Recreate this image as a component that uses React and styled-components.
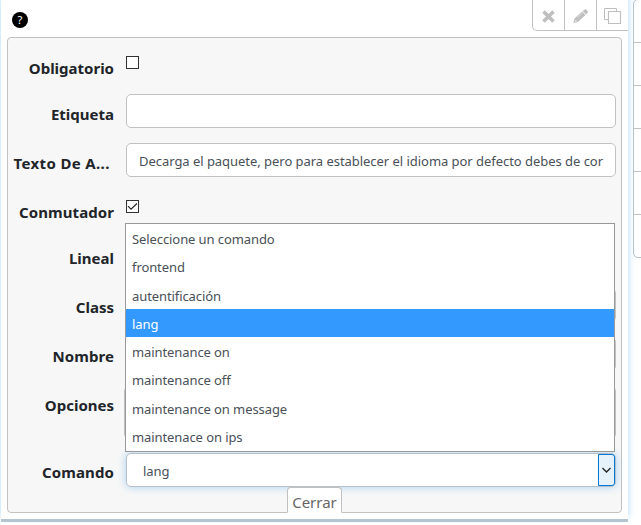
import React from "react";
import styled, { createGlobalStyle } from "styled-components";

const Global = createGlobalStyle`
  * { box-sizing: border-box; }
  body {
    margin: 0;
    background: #fff;
    overflow: hidden;
    font-family: "Noto Sans", "Open Sans", sans-serif;
    color: #212529;
  }
`;

const Page = styled.main`
  display: flex;
  gap: 5px;
  width: 641px;
  height: 525px;
  padding-left: 1px;
  overflow: hidden;
`;

const Card = styled.section`
  width: 627px;
  height: 522px;
  flex: none;
  padding: 0 6px;
  background: #fff;
  border-bottom: 3px solid #b5c4d1;
  box-shadow: 0 -5px 7px 0 #a9d6f8;
`;

const Header = styled.header`
  display: flex;
  justify-content: space-between;
  height: 37px;
  margin-right: -6px;
  padding-left: 5px;
`;

const Help = styled.span`
  display: grid;
  place-items: center;
  width: 16px;
  height: 16px;
  margin-top: 12px;
  border-radius: 50%;
  background: #000;
  color: #fff;
  font-size: 11px;
  line-height: 16px;
`;

const Toolbar = styled.div`
  display: flex;
  height: 31px;
  border: solid #c1c1c1;
  border-width: 0 0 1px 1px;
  border-radius: 0 0 0 5px;
`;

const Tool = styled.button`
  display: block;
  width: 31px;
  height: 30px;
  padding: 0;
  border: 0;
  background: none;
  & + & {
    width: 32px;
    border-left: 1px solid #c1c1c1;
  }
  svg { display: block; }
`;

const Panel = styled.div`
  display: grid;
  grid-template-rows: 56px 49px 49px 47px 49px 49px 49px 67px 59px;
  width: 615px;
  height: 476px;
  border: 1px solid #c1c1c1;
  border-radius: 4px;
  background: #f7f7f7;
`;

const Row = styled.div`
  display: grid;
  grid-template-columns: 106px 490px;
  column-gap: 12px;
  align-items: start;
`;

const Label = styled.label`
  padding-top: ${(p) => p.$drop}px;
  text-align: right;
  font-size: 15px;
  font-weight: 700;
  line-height: 24px;
  letter-spacing: ${(p) => p.$track || 0}px;
  white-space: nowrap;
`;

const Check = styled.span`
  width: 13px;
  height: 13px;
  margin-top: ${(p) => p.$drop}px;
  border: 1px solid #333;
  background: #fff;
  svg { display: block; }
`;

const Field = styled.div`
  height: ${(p) => p.$height || 34}px;
  margin-left: ${(p) => p.$shift || 0}px;
  padding: 0 12px;
  border: 1px solid #c1c1c1;
  border-radius: 5px;
  background: #fff;
  color: #495057;
  font-size: 13px;
  line-height: 34px;
  letter-spacing: -0.04px;
  white-space: nowrap;
`;

const SelectWrap = styled.div`
  position: relative;
`;

const Select = styled.div`
  display: flex;
  justify-content: space-between;
  height: 34px;
  padding-left: 16px;
  border: 1px solid #b9c0c7;
  border-radius: 5px;
  background: #fff;
  box-shadow: 0 0 9px #a4cff0;
  color: #495057;
  font-size: 13px;
  line-height: 34px;
  letter-spacing: -0.1px;
`;

const Arrow = styled.span`
  width: 17px;
  height: 32px;
  border: 1px solid #0078d7;
  border-radius: 0 3px 3px 0;
  background: #e5f1fb;
  svg { display: block; }
`;

const Menu = styled.ul`
  position: absolute;
  left: -1px;
  bottom: 35px;
  width: 490px;
  height: 229px;
  margin: 0;
  padding: 0;
  border: 1px solid #999;
  background: #fff;
  list-style: none;
`;

const Option = styled.li`
  height: 28.3px;
  padding-left: 6px;
  background: ${(p) => (p.$active ? "#3399ff" : "transparent")};
  color: ${(p) => (p.$active ? "#fff" : "#495057")};
  font-size: 13px;
  line-height: 31px;
  letter-spacing: -0.09px;
`;

const Close = styled.button`
  display: block;
  position: relative;
  width: 55px;
  height: 26px;
  margin: -26px 0 0 280px;
  padding: 0;
  border: 1px solid #c1c1c1;
  border-bottom-color: #fff;
  border-radius: 4px 4px 0 0;
  background: #fff;
  color: #666;
  font: 15px/29px "Noto Sans", sans-serif;
`;

const SideList = styled.aside`
  flex: none;
  width: 20px;
  height: 259px;
  margin-top: -1px;
  overflow: hidden;
  border: 1px solid #b9c2ca;
  border-radius: 5px;
`;

const SideItem = styled.div`
  height: 43px;
  border-bottom: 1px solid #c1c1c1;
  &:last-child { border-bottom: 0; }
`;

const options = [
  "Seleccione un comando",
  "frontend",
  "autentificación",
  "lang",
  "maintenance on",
  "maintenance off",
  "maintenance on message",
  "maintenace on ips",
];

export default function App() {
  return (
    <>
      <Global />
      <Page>
        <Card>
          <Header>
            <Help>?</Help>
            <Toolbar>
              <Tool aria-label="Eliminar">
                <svg width="31" height="30" viewBox="0 0 31 30" stroke="#bfbfbf" strokeWidth="3.6">
                  <path d="M10.500 11.500l10 10M20.500 11.500l-10 10" />
                </svg>
              </Tool>
              <Tool aria-label="Editar">
                <svg width="31" height="30" viewBox="0 0 31 30" fill="#bfbfbf">
                  <path d="M8.500 23l1-4.500 7.700-7 3.300 3.600-7.700 7zM17.700 11l2-1.500q.9-.4 1.700.3l1.300 1.400q.6.900 0 1.600l-1.800 1.800z" />
                  <path d="M12.500 17.500l4.800-4.300" stroke="#eee" strokeWidth=".6" />
                  <circle cx="10.800" cy="20.900" r=".7" fill="#fff" />
                </svg>
              </Tool>
              <Tool aria-label="Duplicar">
                <svg width="31" height="30" viewBox="0 0 31 30" fill="#fff" stroke="#bfbfbf">
                  <path d="M7.500 8.500h12v11h-12z" />
                  <path d="M11.500 11.500h12v12h-12z" strokeWidth="1.200" />
                </svg>
              </Tool>
            </Toolbar>
          </Header>
          <Panel>
            <Row>
              <Label $drop={18}>Obligatorio</Label>
              <Check $drop={18} />
            </Row>
            <Row>
              <Label $drop={8}>Etiqueta</Label>
              <Field />
            </Row>
            <Row>
              <Label $drop={8} $track={0.35}>Texto De A...&nbsp;</Label>
              <Field>Decarga el paquete, pero para establecer el idioma por defecto debes de cor</Field>
            </Row>
            <Row>
              <Label $drop={8} $track={0.07}>Conmutador</Label>
              <Check $drop={8}>
                <svg width="11" height="11" viewBox="0 0 11 11" fill="none" stroke="#222" strokeWidth="1.1">
                  <path d="M1 5.200l3 3L10 2.500" />
                </svg>
              </Check>
            </Row>
            <Row>
              <Label $drop={7}>Lineal</Label>
            </Row>
            <Row>
              <Label $drop={7}>Class</Label>
              <Field />
            </Row>
            <Row>
              <Label $drop={7} $track={0.07}>Nombre</Label>
              <Field />
            </Row>
            <Row>
              <Label $drop={7}>Opciones</Label>
              <Field $height={53} $shift={-2} />
            </Row>
            <Row>
              <Label $drop={7} $track={0.1}>Comando</Label>
              <SelectWrap>
                <Select>
                  lang
                  <Arrow>
                    <svg width="15" height="30" viewBox="0 0 15 30" fill="none" stroke="#222" strokeWidth="1.3">
                      <path d="M3.500 13l4 4 4-4" />
                    </svg>
                  </Arrow>
                </Select>
                <Menu>
                  {options.map((name) => (
                    <Option key={name} $active={name === "lang"}>{name}</Option>
                  ))}
                </Menu>
              </SelectWrap>
            </Row>
          </Panel>
          <Close>Cerrar</Close>
        </Card>
        <SideList>
          {[0, 1, 2, 3, 4, 5].map((n) => (
            <SideItem key={n} />
          ))}
        </SideList>
      </Page>
    </>
  );
}
